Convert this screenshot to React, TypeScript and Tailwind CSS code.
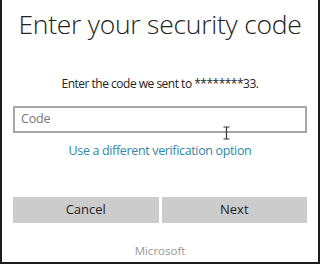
import React from "react";

export default function App() {
  return (
    <div className="relative w-[320px] h-[264px] bg-white border-l-2 border-r-2 border-b-2 border-[#1c1c1c] flex flex-col items-center overflow-hidden" style={{ fontFamily: '"Open Sans", "Noto Sans", sans-serif' }}>
      <h1 className="mt-[6px] text-[26.5px] leading-[36px] font-light text-[#222] tracking-[-0.25px] whitespace-nowrap">
        Enter your security code
      </h1>
      <p className="mt-[34px] text-[12px] leading-[16px] text-[#222] tracking-[-0.5px] whitespace-nowrap">
        Enter the code we sent to ********33.
      </p>
      <div className="mt-[14px] w-[294px] h-[27px] border-2 border-[#a6a6a6] flex items-center px-[6px] text-[12.5px] text-[#777] tracking-[-0.2px]">
        Code
      </div>
      <a className="mt-[10px] text-[12.5px] leading-[16px] text-[#2f86a8] tracking-[-0.35px] whitespace-nowrap">
        Use a different verification option
      </a>
      <div className="mt-[38px] w-[294px] flex gap-[3px]">
        <div className="flex-1 h-[26px] bg-[#cccccc] flex items-center justify-center text-[13px] text-[#222]">Cancel</div>
        <div className="flex-1 h-[26px] bg-[#cccccc] flex items-center justify-center text-[13px] text-[#222]">Next</div>
      </div>
      <div className="mt-[20px] text-[11.5px] leading-[16px] text-[#999]">Microsoft</div>
      <svg className="absolute left-[220px] top-[126px]" width="9" height="14" viewBox="0 0 9 14">
        <path d="M1.5 1h6M4.5 1v12M1.5 13h6" stroke="#333" strokeWidth="1.2" fill="none" />
      </svg>
    </div>
  );
}
